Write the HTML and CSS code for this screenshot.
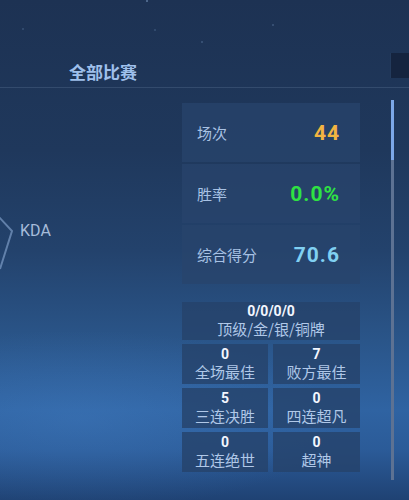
FILE: index.html
```html
<!DOCTYPE html>
<html lang="zh-CN">
<head>
    <meta charset="UTF-8">
    <meta name="viewport" content="width=device-width, initial-scale=1.0">
    <title>战绩统计</title>
    <link rel="stylesheet" href="styles.css">
</head>
<body>
    <!-- 顶部标题栏 -->
    <div class="top-bar">
        <div class="tab-title">全部比赛</div>
        <div class="tab-edge"></div>
    </div>

    <div class="content">
        <!-- 能力雷达图 -->
        <div class="radar">
            <svg class="radar-shape" width="182" height="412" viewBox="0 0 182 412">
                <polyline points="-84,40 12,143 0,181" fill="none" stroke="rgba(150,180,222,0.55)" stroke-width="2"/>
            </svg>
            <div class="radar-label">KDA</div>
        </div>

        <!-- 统计数据 -->
        <div class="stats">
            <div class="stat-card">
                <span class="stat-name">场次</span>
                <span class="stat-value orange">44</span>
            </div>
            <div class="stat-card">
                <span class="stat-name">胜率</span>
                <span class="stat-value green">0.0%</span>
            </div>
            <div class="stat-card">
                <span class="stat-name">综合得分</span>
                <span class="stat-value blue">70.6</span>
            </div>

            <div class="honor-grid">
                <div class="honor wide">
                    <div class="honor-num">0/0/0/0</div>
                    <div class="honor-name">顶级/金/银/铜牌</div>
                </div>
                <div class="honor">
                    <div class="honor-num">0</div>
                    <div class="honor-name">全场最佳</div>
                </div>
                <div class="honor">
                    <div class="honor-num">7</div>
                    <div class="honor-name">败方最佳</div>
                </div>
                <div class="honor">
                    <div class="honor-num">5</div>
                    <div class="honor-name">三连决胜</div>
                </div>
                <div class="honor">
                    <div class="honor-num">0</div>
                    <div class="honor-name">四连超凡</div>
                </div>
                <div class="honor">
                    <div class="honor-num">0</div>
                    <div class="honor-name">五连绝世</div>
                </div>
                <div class="honor">
                    <div class="honor-num">0</div>
                    <div class="honor-name">超神</div>
                </div>
            </div>
        </div>

        <!-- 滚动条 -->
        <div class="scroll-track">
            <div class="scroll-thumb"></div>
        </div>
    </div>
</body>
</html>
```

FILE: styles.css
```css
/* 全局样式 */
body {
    margin: 0;
    width: 409px;
    height: 500px;
    overflow: hidden;
    font-family: "Noto Sans CJK SC", "Noto Sans", sans-serif;
    background:
        radial-gradient(ellipse 260px 90px at 80px 420px, rgba(70, 130, 200, 0.35), transparent),
        linear-gradient(180deg, #1d3253 0%, #1f385c 30%, #23426c 50%, #2a5589 68%, #2f63a2 82%, #2b5b98 90%, #1f4273 100%);
}

/* 顶部标题栏 */
.top-bar {
    height: 88px;
    display: flex;
    align-items: flex-start;
    padding-top: 53px;
    box-sizing: border-box;
    border-bottom: 1px solid #334b6d;
    background:
        radial-gradient(circle at 147px 1px, #8fb0d8 0, transparent 1.2px),
        radial-gradient(circle at 202px 42px, #6f8fb8 0, transparent 1px),
        radial-gradient(circle at 273px 25px, #6f8fb8 0, transparent 1px),
        radial-gradient(circle at 155px 30px, #5f7ea6 0, transparent 1px),
        radial-gradient(circle at 23px 29px, #5f7ea6 0, transparent 1px);
}

.tab-title {
    margin-top: 9px;
    padding-left: 69px;
    font-size: 17px;
    line-height: 20px;
    font-weight: bold;
    color: #9fc0ec;
}

.tab-edge {
    margin-left: auto;
    width: 18px;
    height: 25px;
    background: #15243f;
    border-left: 1px solid #233a5c;
}

/* 主体 */
.content {
    display: flex;
    height: 412px;
}

/* 雷达图 */
.radar {
    position: relative;
    width: 182px;
    flex-shrink: 0;
}

.radar-shape {
    position: absolute;
    left: 0;
    top: 0;
}

.radar-label {
    position: absolute;
    left: 20px;
    top: 133px;
    font-family: Roboto, "Noto Sans", sans-serif;
    font-size: 16px;
    line-height: 20px;
    color: #a6bcda;
}

/* 统计数据 */
.stats {
    width: 178px;
    padding-top: 15px;
    display: flex;
    flex-direction: column;
    gap: 2px;
}

.stat-card {
    height: 59px;
    display: flex;
    align-items: center;
    justify-content: space-between;
    padding: 0 21px 0 15px;
    background: rgba(40, 68, 108, 0.75);
}

.stat-name {
    font-size: 15px;
    color: #a8c2e4;
}

.stat-value {
    font-family: Roboto, "Noto Sans", sans-serif;
    font-size: 21px;
    font-weight: bold;
    letter-spacing: 1px;
    margin-right: -1px;
}

.orange { color: #f2b441; }
.green  { color: #2fe243; }
.blue   { color: #80d0f2; }

/* 荣誉网格 */
.honor-grid {
    margin-top: 16px;
    display: grid;
    grid-template-columns: 86px 87px;
    grid-template-rows: 38px 40px 40px 40px;
    column-gap: 5px;
    row-gap: 4px;
}

.honor {
    display: flex;
    flex-direction: column;
    align-items: center;
    justify-content: center;
    background: rgba(38, 66, 106, 0.8);
}

.honor.wide {
    grid-column: span 2;
}

.honor-num {
    font-family: Roboto, "Noto Sans", sans-serif;
    font-size: 14px;
    line-height: 16px;
    font-weight: bold;
    color: #f2f6ff;
}

.honor-name {
    font-size: 15px;
    line-height: 21px;
    margin-top: -1px;
    color: #b0c8e8;
}

/* 滚动条 */
.scroll-track {
    margin: 12px 0 0 31px;
    width: 3px;
    height: 380px;
    background: #5d7293;
}

.scroll-thumb {
    height: 60px;
    background: #7ca8e8;
}
```
